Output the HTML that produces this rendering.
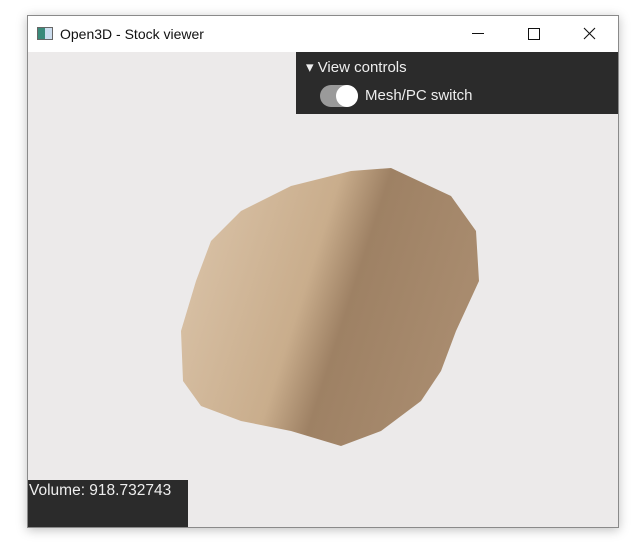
<!DOCTYPE html>
<html><head><style>
body{margin:0;width:640px;height:552px;background:#fff;position:relative;overflow:hidden;font-family:"Liberation Sans",sans-serif}
.win{position:absolute;left:27px;top:15px;width:590px;height:511px;border:1px solid #8a8a8a;background:#eceaea;box-shadow:0 2px 10px rgba(0,0,0,.25)}
.tb{position:absolute;left:0;top:0;width:590px;height:36px;background:#fff;font-size:14px;color:#111}
.panel{position:absolute;left:268px;top:36px;width:322px;height:62px;background:#2b2b2b;color:#eee;font-size:15px}
.vol{position:absolute;left:0;bottom:0;width:160px;height:47px;background:#2b2b2b;color:#eee;font-size:15.5px}
</style></head><body>
<div class="win">
<div class="tb">
<div style="position:absolute;left:9px;top:11px;width:14px;height:11px;border:1px solid #666;background:linear-gradient(90deg,#3a8a7a 50%,#cde 50%)"></div>
<div style="position:absolute;left:32px;top:10px">Open3D - Stock viewer</div>
<div style="position:absolute;left:444px;top:17px;width:12px;height:1px;background:#111"></div>
<div style="position:absolute;left:500px;top:12px;width:10px;height:10px;border:1px solid #111"></div>
<svg style="position:absolute;left:555px;top:11px" width="13" height="13"><path d="M1 1L12 12M12 1L1 12" stroke="#111" stroke-width="1.1"/></svg>
</div>
<div class="panel">
<div style="position:absolute;left:10px;top:6px">▾ View controls</div>
<div style="position:absolute;left:24px;top:33px;width:38px;height:22px;border-radius:11px;background:#9a9a9a"></div>
<div style="position:absolute;left:40px;top:33px;width:22px;height:22px;border-radius:11px;background:#fff"></div>
<div style="position:absolute;left:69px;top:35px">Mesh/PC switch</div>
</div>
<svg style="position:absolute;left:0;top:36px" width="590" height="475">
<defs><linearGradient id="g" x1="0" y1="0" x2="1" y2="0.3"><stop offset="0" stop-color="#dcc6ac"/><stop offset=".5" stop-color="#c9ad8c"/><stop offset=".65" stop-color="#9e8164"/><stop offset="1" stop-color="#a88b6e"/></linearGradient></defs>
<path d="M363 116L423 144L448 179L451 229L428 279L413 319L393 349L353 379L313 394L263 379L213 369L173 354L155 329L153 279L168 229L183 189L213 159L263 134L323 119Z" fill="url(#g)"/>
</svg>
<div class="vol"><div style="position:absolute;left:1px;top:2px">Volume: 918.732743</div></div>
</div>
</body></html>
